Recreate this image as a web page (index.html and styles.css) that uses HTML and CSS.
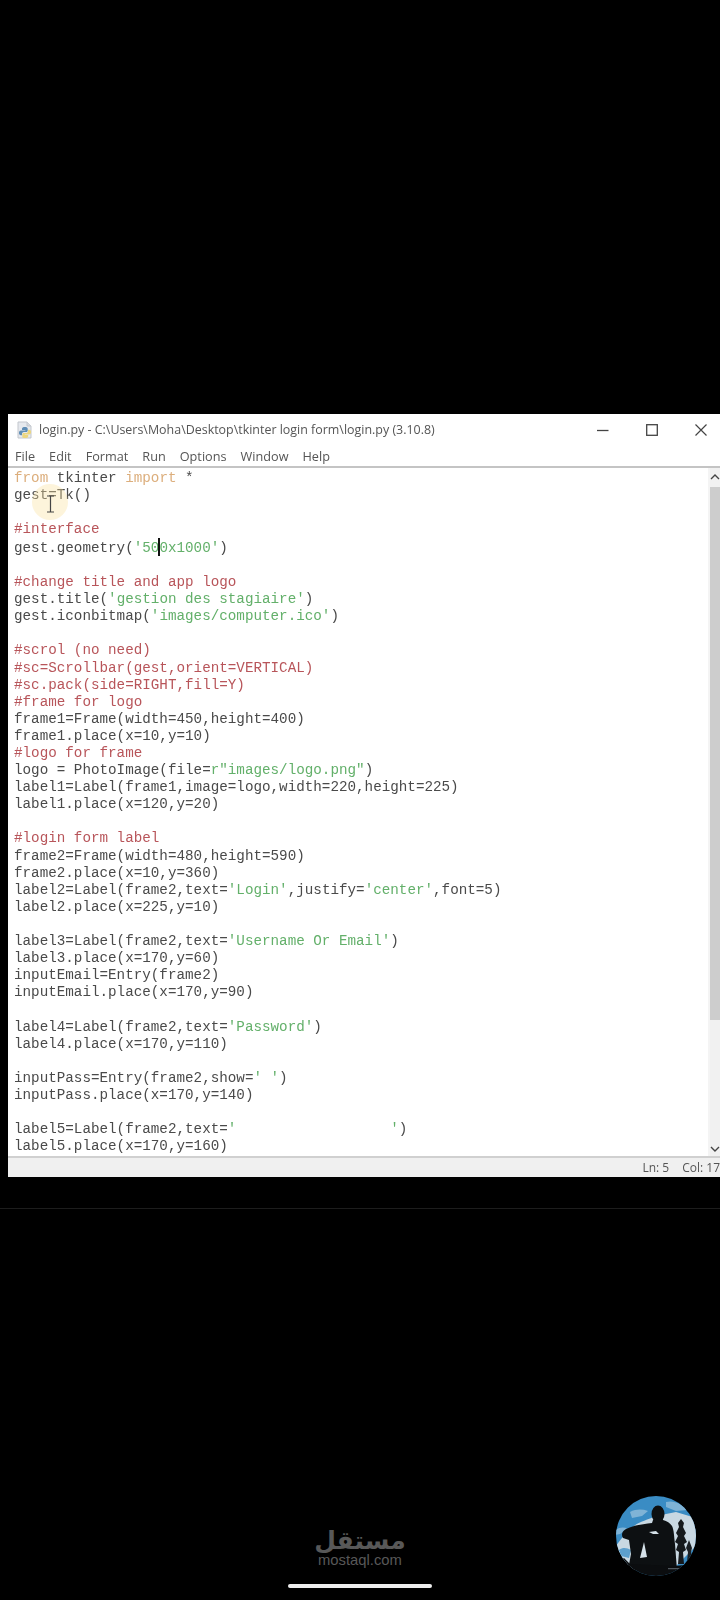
FILE: index.html
```html
<!DOCTYPE html>
<html lang="en">
<head>
<meta charset="utf-8">
<title>login.py</title>
<link rel="stylesheet" href="styles.css">
</head>
<body>
<main class="window">
  <header class="titlebar">
    <svg class="py-icon" viewBox="0 0 18 18" width="18" height="18">
      <path d="M2 1h9l4 4v12H2z" fill="#e6e9ee" stroke="#c3c7cd"/>
      <path d="M11 1v4h4" fill="#d5d9e0" stroke="#c3c7cd"/>
      <path d="M9 6c-2 0-3 .6-3 1.800V9h3.400v.6H4.800C3.600 9.600 3 10.600 3 12s.8 2.200 1.800 2.200H6v-1.500c0-1 .9-1.800 1.900-1.800h2.300c.9 0 1.500-.7 1.500-1.500V7.800C11.700 6.600 10.600 6 9 6z" fill="#5f8db5"/>
      <path d="M9.200 17c2 0 3-.6 3-1.800V14H8.800v-.6h4.400c1.200 0 1.800-1 1.800-2.400s-.8-2.200-1.800-2.200H12v1.500c0 1-.9 1.800-1.900 1.800H7.800c-.9 0-1.500.7-1.500 1.500v2.200c0 1.200 1.300 1.200 2.900 1.200z" fill="#ecd67e"/>
    </svg>
    <span class="title-text">login.py - C:\Users\Moha\Desktop\tkinter login form\login.py (3.10.8)</span>
    <div class="controls">
      <svg viewBox="0 0 12 12" width="12" height="12"><path d="M0 6.500h11.500" stroke="#444" stroke-width="1.300"/></svg>
      <svg viewBox="0 0 12 12" width="12" height="12"><rect x=".7" y=".7" width="10.600" height="10.600" fill="none" stroke="#444" stroke-width="1.300"/></svg>
      <svg viewBox="0 0 12 12" width="12" height="12"><path d="M.5.500l11 11M11.500.500l-11 11" stroke="#444" stroke-width="1.200" fill="none"/></svg>
    </div>
  </header>
  <nav class="menubar">
    <span>File</span><span>Edit</span><span>Format</span><span>Run</span><span>Options</span><span>Window</span><span>Help</span>
  </nav>
  <div class="editor">
<pre class="code"><span class="kw">from</span> tkinter <span class="kw">import</span> *
gest=Tk()

<span class="cm">#interface</span>
gest.geometry(<span class="st">'50<span class="caret"></span>0x1000'</span>)

<span class="cm">#change title and app logo</span>
gest.title(<span class="st">'gestion des stagiaire'</span>)
gest.iconbitmap(<span class="st">'images/computer.ico'</span>)

<span class="cm">#scrol (no need)</span>
<span class="cm">#sc=Scrollbar(gest,orient=VERTICAL)</span>
<span class="cm">#sc.pack(side=RIGHT,fill=Y)</span>
<span class="cm">#frame for logo</span>
frame1=Frame(width=450,height=400)
frame1.place(x=10,y=10)
<span class="cm">#logo for frame</span>
logo = PhotoImage(file=<span class="st">r"images/logo.png"</span>)
label1=Label(frame1,image=logo,width=220,height=225)
label1.place(x=120,y=20)

<span class="cm">#login form label</span>
frame2=Frame(width=480,height=590)
frame2.place(x=10,y=360)
label2=Label(frame2,text=<span class="st">'Login'</span>,justify=<span class="st">'center'</span>,font=5)
label2.place(x=225,y=10)

label3=Label(frame2,text=<span class="st">'Username Or Email'</span>)
label3.place(x=170,y=60)
inputEmail=Entry(frame2)
inputEmail.place(x=170,y=90)

label4=Label(frame2,text=<span class="st">'Password'</span>)
label4.place(x=170,y=110)

inputPass=Entry(frame2,show=<span class="st">' '</span>)
inputPass.place(x=170,y=140)

label5=Label(frame2,text=<span class="st">'                  '</span>)
label5.place(x=170,y=160)</pre>
    <div class="scrollbar">
      <svg class="arrow" viewBox="0 0 10 6" width="10" height="6"><path d="M1 5l4-4 4 4" fill="none" stroke="#444" stroke-width="1.400"/></svg>
      <div class="thumb"></div>
      <svg class="arrow" viewBox="0 0 10 6" width="10" height="6"><path d="M1 1l4 4 4-4" fill="none" stroke="#444" stroke-width="1.400"/></svg>
    </div>
    <div class="pointer-glow"></div>
    <svg class="ibeam" viewBox="0 0 9 18" width="9" height="18"><path d="M1 1h7M4.500 1v16M1 17h7" fill="none" stroke="#444" stroke-width="1.200"/></svg>
  </div>
  <footer class="statusbar"><span>Ln: 5</span><span>Col: 17</span></footer>
</main>
<div class="divider"></div>
<section class="bottom">
  <div class="brand">
    <span class="brand-ar" lang="ar" dir="rtl">مستقل</span>
    <span class="brand-en">mostaql.com</span>
  </div>
  <svg class="avatar" viewBox="0 0 80 80" width="80" height="80">
    <defs><clipPath id="disc"><circle cx="40" cy="40" r="40"/></clipPath></defs>
    <g clip-path="url(#disc)">
      <rect width="80" height="80" fill="#3a8cc4"/>
      <path d="M0 50C6 42 10 36 18 30c6-5 14-6 22-10l20-4 20 6v28l-24 24H0z" fill="#c9d8e2"/>
      <path d="M14 16c6-3 12-3 18-1l-6 5-10 2zM50 6c8-2 16 2 22 8l-12 1-10-4zM0 34c4-3 8-3 12-1l-8 5-6 1z" fill="#7fb3d6"/>
      <path d="M3 54c4-3 8-2 12 0l-2 8-8-2z" fill="#5d9fcc"/>
      <path d="M62 68l1-12-3-2 2-6-3-2 3-6-2-3 3-6-1-4 3-4 3 4-1 4 3 6-2 3 3 6-3 2 2 6-3 2 1 12z" fill="#15191c"/>
      <path d="M71 66l1-10-2-4 3-8 3 8-1 4 2 10z" fill="#1b2024"/>
      <ellipse cx="42" cy="18" rx="6.500" ry="8.500" fill="#0d1012"/>
      <path d="M37 24l-1 3c-8 1-18 2-26 6-4 2-5 6-3 9l6 2 2 14-3 16h49l-2-26c-1-8-1-14-3-18-2-3-5-5-9-6l-1-3z" fill="#0d1012"/>
      <path d="M33 36l7-1 3 3-6 0zM24 62l4-16 3 15z" fill="#d5e1e9"/>
      <path d="M0 68l8-6 6 6 44 2 22-2v12H0z" fill="#0b0d0f"/>
      <path d="M52 72h24v1.200H52z" fill="#50575e"/>
    </g>
  </svg>
</section>
<div class="homebar"></div>
</body>
</html>
```

FILE: styles.css
```css
* { box-sizing: border-box; }
html, body { margin: 0; padding: 0; background: #000; }
body { width: 720px; height: 1600px; overflow: hidden; font-family: "Open Sans", "Noto Sans", sans-serif; }

.window {
  margin: 414px 0 0 8px;
  width: 712px;
  height: 763px;
  background: #fff;
  display: flex;
  flex-direction: column;
  color: #4a4a4a;
}

.titlebar {
  height: 29px;
  flex: none;
  display: flex;
  align-items: center;
  padding-left: 8px;
  padding-top: 2px;
  font-size: 12.450px;
  filter: blur(0.35px);
}
.py-icon { flex: none; margin-right: 5px; filter: blur(0.5px); }
.title-text { white-space: nowrap; color: #555; }
.controls { margin-left: auto; display: flex; gap: 37px; padding-right: 13px; }

.menubar {
  height: 25px;
  flex: none;
  display: flex;
  align-items: center;
  gap: 14px;
  padding: 3px 0 0 7px;
  font-size: 12.700px;
  color: #555;
  border-bottom: 2px solid #c4c4c4;
  filter: blur(0.3px);
}

.editor { position: relative; flex: 1; display: flex; min-height: 0; overflow: hidden; }

.code {
  flex: 1;
  margin: 0;
  padding: 1.500px 0 0 6px;
  font-family: "Liberation Mono", monospace;
  font-size: 14.260px;
  line-height: 17.100px;
  color: #4a4a4a;
  filter: blur(0.4px);
}
.kw { color: #dcae7c; }
.cm { color: #b8555a; }
.st { color: #63b06a; }
.caret {
  display: inline-block;
  width: 2px;
  height: 18px;
  margin: 0 -1px -4px -1px;
  background: #111;
}

.scrollbar {
  flex: none;
  width: 12px;
  border-left: 2px solid #f4f4f4;
  background: #f1f1f1;
  display: flex;
  flex-direction: column;
  align-items: center;
  padding: 6px 0 4px;
}
.arrow { flex: none; }
.thumb { width: 100%; flex: none; height: 533px; margin: 7px 0 auto; background: #cdcdcd; }

.pointer-glow {
  position: absolute;
  left: 24px;
  top: 16px;
  width: 36px;
  height: 36px;
  border-radius: 50%;
  background: rgba(250, 225, 160, 0.38);
  pointer-events: none;
}
.ibeam { position: absolute; left: 38px; top: 27px; }

.statusbar {
  height: 21px;
  flex: none;
  display: flex;
  align-items: center;
  justify-content: flex-end;
  gap: 13px;
  border-top: 2px solid #d0d0d0;
  background: #f0f0f0;
  font-size: 12px;
  color: #555;
  white-space: nowrap;
  overflow: hidden;
  filter: blur(0.3px);
}

.divider { height: 1px; margin-top: 31px; background: #1d1d1d; }

.bottom {
  margin-top: 287px;
  height: 80px;
  display: flex;
  align-items: flex-end;
  padding: 0 24px 0 317px;
}
.brand { display: flex; flex-direction: column; align-items: center; width: 86px; padding-bottom: 8px; color: #585858; }
.brand-ar { font-family: "DejaVu Sans", sans-serif; font-weight: 700; font-size: 25px; line-height: 30px; margin-bottom: -4px; white-space: nowrap; }
.brand-en { font-family: "Liberation Sans", sans-serif; font-size: 14.800px; line-height: 16px; white-space: nowrap; }
.avatar { margin-left: auto; flex: none; }

.homebar { width: 144px; height: 4px; margin: 8px auto 0; background: #eee; border-radius: 2px; }
```
